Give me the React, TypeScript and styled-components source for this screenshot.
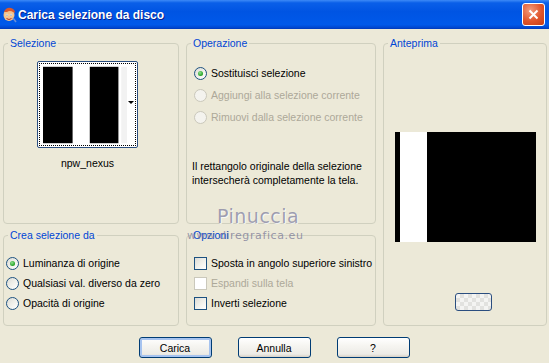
import styled, { createGlobalStyle } from "styled-components";

const GlobalStyle = createGlobalStyle`
  html, body {
    margin: 0;
    padding: 0;
    background: #ece9d8;
  }
  body {
    font-family: "Liberation Sans", Arial, sans-serif;
    font-size: 10.5px;
    color: #000000;
  }
`;

function TitleIcon() {
  return (
    <svg width="15" height="16" viewBox="0 0 15 16">
      <ellipse cx="7" cy="8" rx="5.5" ry="6" fill="#f4c28a" />
      <path d="M2 5 Q4 0 9 1 Q13 2 13 6 L11 5 Q8 3 5 5 Z" fill="#d9582b" />
      <circle cx="5" cy="8" r="1.3" fill="#ffffff" />
      <circle cx="9" cy="8" r="1.3" fill="#ffffff" />
      <circle cx="5" cy="8" r="0.6" fill="#1a1a1a" />
      <circle cx="9" cy="8" r="0.6" fill="#1a1a1a" />
      <path d="M4.5 11.5 Q7 13.5 9.5 11.5" stroke="#b0302a" strokeWidth="1" fill="none" />
      <path d="M11 11 L14 15" stroke="#6b8ed6" strokeWidth="1.5" />
    </svg>
  );
}

function Thumb() {
  return (
    <svg width="88" height="80" viewBox="0 0 88 80">
      <rect x="0" y="0" width="88" height="80" fill="#ffffff" />
      <rect x="0" y="0" width="31" height="80" fill="#000000" />
      <rect x="49" y="0" width="30" height="80" fill="#000000" />
      <rect x="82" y="0" width="6" height="80" fill="#f2f2f2" />
    </svg>
  );
}

type RadioProps = { checked?: boolean; disabled?: boolean };

function Radio({ checked, disabled }: RadioProps) {
  return (
    <RadioCircle $disabled={disabled}>{checked && <RadioDot />}</RadioCircle>
  );
}

export default function App() {
  return (
    <>
      <GlobalStyle />
      <Window>
        <TitleBar>
          <TitleIcon />
          <TitleText>Carica selezione da disco</TitleText>
          <CloseButton>
            <svg width="11" height="11" viewBox="0 0 11 11">
              <path d="M1.5 1.5 L9.5 9.5 M9.5 1.5 L1.5 9.5" stroke="#ffffff" strokeWidth="2" />
            </svg>
          </CloseButton>
        </TitleBar>

        <Body>
          <Groups>
            <Group style={{ gridColumn: 1, gridRow: 1 }}>
              <Legend>Selezione</Legend>
              <SelectionColumn>
                <ThumbBox>
                  <ThumbFocus>
                    <Thumb />
                  </ThumbFocus>
                  <DropArrow />
                </ThumbBox>
                <ThumbLabel>npw_nexus</ThumbLabel>
              </SelectionColumn>
            </Group>

            <Group style={{ gridColumn: 2, gridRow: 1 }}>
              <Legend>Operazione</Legend>
              <OptionList $top={12} $left={7} $row={22}>
                <Option>
                  <Radio checked />
                  <OptionText>Sostituisci selezione</OptionText>
                </Option>
                <Option>
                  <Radio disabled />
                  <OptionText $disabled>Aggiungi alla selezione corrente</OptionText>
                </Option>
                <Option>
                  <Radio disabled />
                  <OptionText $disabled>Rimuovi dalla selezione corrente</OptionText>
                </Option>
              </OptionList>
              <Note>
                Il rettangolo originale della selezione
                <br />
                intersecherà completamente la tela.
              </Note>
            </Group>

            <PreviewGroup>
              <Legend>Anteprima</Legend>
              <PreviewImage>
                <PreviewStripe />
              </PreviewImage>
              <CheckerButton />
            </PreviewGroup>

            <Group style={{ gridColumn: 1, gridRow: 2 }}>
              <Legend>Crea selezione da</Legend>
              <OptionList $top={11} $left={2} $row={20}>
                <Option>
                  <Radio checked />
                  <OptionText>Luminanza di origine</OptionText>
                </Option>
                <Option>
                  <Radio />
                  <OptionText>Qualsiasi val. diverso da zero</OptionText>
                </Option>
                <Option>
                  <Radio />
                  <OptionText>Opacità di origine</OptionText>
                </Option>
              </OptionList>
            </Group>

            <Group style={{ gridColumn: 2, gridRow: 2 }}>
              <Legend>Opzioni</Legend>
              <OptionList $top={11} $left={7} $row={20}>
                <Option>
                  <CheckBox />
                  <OptionText>Sposta in angolo superiore sinistro</OptionText>
                </Option>
                <Option>
                  <CheckBox $disabled />
                  <OptionText $disabled>Espandi sulla tela</OptionText>
                </Option>
                <Option>
                  <CheckBox />
                  <OptionText>Inverti selezione</OptionText>
                </Option>
              </OptionList>
            </Group>
          </Groups>

          <ButtonRow>
            <PushButton $default>Carica</PushButton>
            <PushButton>Annulla</PushButton>
            <PushButton>?</PushButton>
          </ButtonRow>

          <Watermark>
            <WatermarkName>Pinuccia</WatermarkName>
            <WatermarkSite>www.diregrafica.eu</WatermarkSite>
          </Watermark>
        </Body>
      </Window>
    </>
  );
}

const Window = styled.div`
  width: 549px;
  height: 363px;
  display: flex;
  flex-direction: column;
  background: #ece9d8;
  overflow: hidden;
`;

const TitleBar = styled.div`
  height: 29px;
  display: flex;
  align-items: center;
  padding: 0 4px 0 2px;
  box-sizing: border-box;
  background: linear-gradient(
    #3d8af7 0%,
    #0a5fe8 10%,
    #0054e3 40%,
    #0059ea 85%,
    #0047d0 95%,
    #0038b8 100%
  );
`;

const TitleText = styled.span`
  margin-left: 1px;
  font-family: "Liberation Sans", Arial, sans-serif;
  font-weight: bold;
  font-size: 12px;
  color: #ffffff;
  text-shadow: 1px 1px 0 #0a1e8a;
  flex: 1;
`;

const CloseButton = styled.div`
  width: 21px;
  height: 21px;
  border: 1px solid #ffffff;
  border-radius: 3px;
  display: flex;
  align-items: center;
  justify-content: center;
  background: radial-gradient(circle at 35% 30%, #f29b7d 0%, #e0552c 55%, #c43c14 100%);
`;

const Body = styled.div`
  position: relative;
  flex: 1;
  padding: 8px 2px 0 3px;
`;

const Groups = styled.div`
  display: grid;
  grid-template-columns: 176px 190px 164px;
  grid-template-rows: 187px 97px;
  column-gap: 7px;
  row-gap: 5px;
`;

const Group = styled.fieldset`
  margin: 0;
  padding: 0;
  min-width: 0;
  border: 1px solid #d0d0bf;
  border-radius: 4px;
  box-sizing: border-box;
`;

const PreviewGroup = styled(Group)`
  grid-column: 3;
  grid-row: 1 / span 2;
`;

const Legend = styled.legend`
  margin-left: 4px;
  padding: 0 2px;
  line-height: 13px;
  font-size: 10.5px;
  color: #0046d5;
`;

const SelectionColumn = styled.div`
  width: 101px;
  margin: 11px 0 0 33px;
  display: flex;
  flex-direction: column;
  align-items: center;
`;

const ThumbBox = styled.div`
  position: relative;
  width: 101px;
  height: 87px;
  box-sizing: border-box;
  border: 1px solid #2b4e7f;
  border-radius: 2px;
  background: #ffffff;
  padding: 1px;
`;

const ThumbFocus = styled.div`
  height: 100%;
  box-sizing: border-box;
  border: 1px dotted #000000;
  padding: 1px 8px 1px 3px;
  display: flex;
`;

const DropArrow = styled.div`
  position: absolute;
  right: 3px;
  top: 39px;
  width: 0;
  height: 0;
  border-left: 3px solid transparent;
  border-right: 3px solid transparent;
  border-top: 3px solid #000000;
`;

const ThumbLabel = styled.div`
  margin-top: 9px;
  line-height: 13px;
`;

const OptionList = styled.div<{ $top: number; $left: number; $row: number }>`
  padding: ${(p) => p.$top}px 0 0 ${(p) => p.$left}px;
  display: flex;
  flex-direction: column;

  & > div {
    height: ${(p) => p.$row}px;
  }
`;

const Option = styled.div`
  display: flex;
  align-items: center;
  gap: 4px;
`;

const OptionText = styled.span<{ $disabled?: boolean }>`
  white-space: nowrap;
  color: ${(p) => (p.$disabled ? "#aca899" : "#000000")};
`;

const RadioCircle = styled.span<{ $disabled?: boolean }>`
  width: 13px;
  height: 13px;
  box-sizing: border-box;
  border-radius: 50%;
  border: 1px solid ${(p) => (p.$disabled ? "#cac8bb" : "#1c5180")};
  background: ${(p) =>
    p.$disabled
      ? "#f4f3ee"
      : "linear-gradient(135deg, #dcdcd7 0%, #f0f0ea 50%, #ffffff 100%)"};
  display: flex;
  align-items: center;
  justify-content: center;
  flex-shrink: 0;
`;

const RadioDot = styled.span`
  width: 5px;
  height: 5px;
  border-radius: 50%;
  background: radial-gradient(circle at 40% 35%, #8fe08f 0%, #21a121 70%, #188018 100%);
`;

const CheckBox = styled.span<{ $disabled?: boolean }>`
  width: 13px;
  height: 13px;
  box-sizing: border-box;
  border: 1px solid ${(p) => (p.$disabled ? "#cac8bb" : "#1c5180")};
  background: ${(p) =>
    p.$disabled
      ? "#ffffff"
      : "linear-gradient(135deg, #dcdcd7 0%, #f0f0ea 50%, #ffffff 100%)"};
  flex-shrink: 0;
`;

const Note = styled.div`
  margin: 31px 0 0 5px;
  line-height: 14px;
`;

const PreviewImage = styled.div`
  margin: 82px 0 0 11px;
  width: 141px;
  height: 110px;
  background: #000000;
  display: flex;
  padding-left: 5px;
  box-sizing: border-box;
`;

const PreviewStripe = styled.div`
  width: 27px;
  background: #ffffff;
`;

const CheckerButton = styled.div`
  margin: 51px 0 0 71px;
  width: 37px;
  height: 18px;
  box-sizing: border-box;
  border: 1px solid #2b4e7f;
  border-radius: 3px;
  background-color: #f4f4f2;
  background-image: linear-gradient(45deg, #e2e2df 25%, transparent 25%, transparent 75%, #e2e2df 75%),
    linear-gradient(45deg, #e2e2df 25%, transparent 25%, transparent 75%, #e2e2df 75%);
  background-size: 8px 8px;
  background-position: 0 0, 4px 4px;
`;

const ButtonRow = styled.div`
  margin-top: 11px;
  display: flex;
  justify-content: center;
  gap: 26px;
  padding-right: 2px;
`;

const PushButton = styled.div<{ $default?: boolean }>`
  width: 73px;
  height: 21px;
  box-sizing: border-box;
  border: 1px solid #003c74;
  border-radius: 3px;
  display: flex;
  align-items: center;
  justify-content: center;
  background: linear-gradient(#ffffff 0%, #f6f5f1 40%, #ecebe6 85%, #d6d0c5 100%);
  box-shadow: ${(p) => (p.$default ? "inset 0 0 0 2px #a6c3ef" : "none")};
`;

const Watermark = styled.div`
  position: absolute;
  left: 187px;
  top: 176px;
  display: flex;
  flex-direction: column;
  align-items: flex-start;
  pointer-events: none;
`;

const WatermarkName = styled.span`
  margin-left: 30px;
  font-family: "DejaVu Sans", Verdana, sans-serif;
  font-size: 19px;
  letter-spacing: 0.5px;
  color: rgba(130, 130, 160, 0.75);
  text-shadow: 1px 1px 0 rgba(255, 255, 255, 0.7);
  line-height: 22px;
`;

const WatermarkSite = styled.span`
  margin-top: 2px;
  font-family: "DejaVu Sans", Verdana, sans-serif;
  font-size: 11px;
  letter-spacing: 0.6px;
  color: rgba(120, 120, 150, 0.75);
  line-height: 13px;
`;
